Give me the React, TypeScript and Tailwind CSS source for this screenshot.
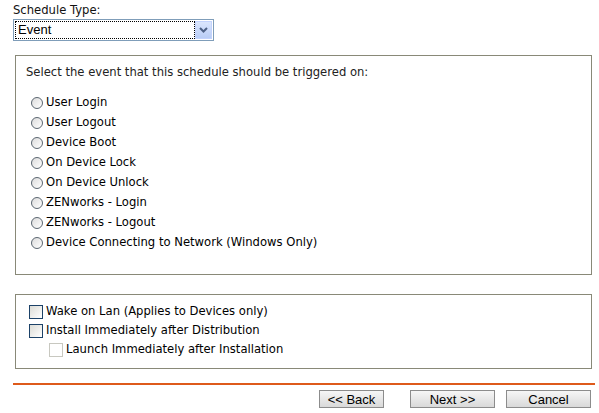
import React from 'react'

const events = [
  'User Login',
  'User Logout',
  'Device Boot',
  'On Device Lock',
  'On Device Unlock',
  'ZENworks - Login',
  'ZENworks - Logout',
  'Device Connecting to Network (Windows Only)',
]

const font = "font-['DejaVu_Sans',sans-serif]"

function Radio() {
  return (
    <span className="w-[12px] h-[12px] rounded-full border border-[#5b6670] bg-gradient-to-br from-[#dcdcdc] to-white shrink-0" />
  )
}

function Checkbox({ disabled }: { disabled?: boolean }) {
  return (
    <span
      className={
        disabled
          ? 'w-[14px] h-[14px] border border-[#c8c8c0] bg-white shrink-0'
          : 'w-[14px] h-[14px] border border-[#1c4268] bg-gradient-to-br from-[#dcdcd6] to-white shrink-0'
      }
    />
  )
}

function Button({ label, className }: { label: string; className: string }) {
  return (
    <button
      className={`${className} h-[18px] border border-[#8c8c8c] bg-gradient-to-b from-[#f6f6f6] to-[#d9d9d9] text-[13px] leading-none text-black font-['Liberation_Sans',sans-serif]`}
    >
      {label}
    </button>
  )
}

export default function App() {
  return (
    <div className={`w-[599px] h-[413px] bg-white pl-[13px] pt-[3px] text-[11.6px] text-black ${font}`}>
      {/* Schedule type */}
      <div className="leading-[15px] text-[#111]">Schedule Type:</div>
      <div className="mt-[1px] w-[201px] h-[22px] border border-[#7f9db9] flex items-stretch p-[1px]">
        <div className="flex-1 border border-dotted border-black flex items-center pl-[2px] text-[13px] font-['Liberation_Sans',sans-serif]">
          Event
        </div>
        <div className="w-[17px] flex items-center justify-center bg-gradient-to-b from-[#dbe6fd] to-[#b9cdf6] border border-[#c3d3fd]">
          <svg width="9" height="6" viewBox="0 0 9 6">
            <path d="M1 1l3.5 3.5L8 1" fill="none" stroke="#4d6185" strokeWidth="2" />
          </svg>
        </div>
      </div>

      {/* Event box */}
      <div className="ml-[2px] mt-[14px] w-[577px] h-[220px] border border-[#898978] pl-[10px] pt-[9px]">
        <div className="leading-[15px] text-[#222]">Select the event that this schedule should be triggered on:</div>
        <div className="mt-[13px] flex flex-col">
          {events.map((e) => (
            <label key={e} className="h-[20px] flex items-center gap-[3px] pl-[5px]">
              <Radio />
              <span>{e}</span>
            </label>
          ))}
        </div>
      </div>

      {/* Options box */}
      <div className="ml-[2px] mt-[19px] w-[577px] h-[75px] border border-[#898978] pl-[13px] pt-[8px]">
        <label className="h-[18px] flex items-center gap-[3px]">
          <Checkbox />
          <span>Wake on Lan (Applies to Devices only)</span>
        </label>
        <label className="h-[19px] flex items-center gap-[3px]">
          <Checkbox />
          <span>Install Immediately after Distribution</span>
        </label>
        <label className="h-[19px] flex items-center gap-[3px] pl-[20px]">
          <Checkbox disabled />
          <span>Launch Immediately after Installation</span>
        </label>
      </div>

      <div className="mt-[14px] w-[582px] h-[2px] bg-[#de5a1b]" />

      <div className="mt-[5px] w-[578px] flex justify-end">
        <Button label="<< Back" className="w-[65px]" />
        <Button label="Next >>" className="w-[85px] ml-[26px]" />
        <Button label="Cancel" className="w-[85px] ml-[11px]" />
      </div>
    </div>
  )
}
